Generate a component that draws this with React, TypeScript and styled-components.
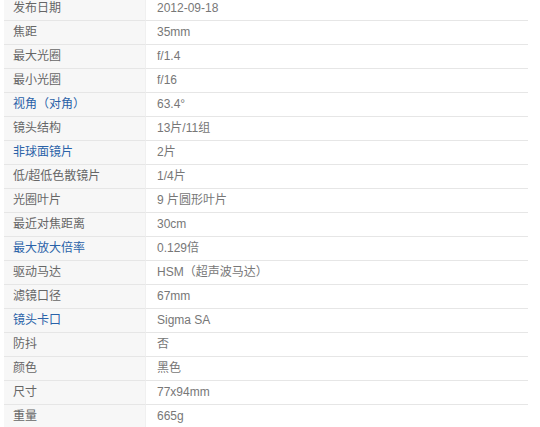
import styled, { createGlobalStyle } from 'styled-components'

type Spec = {
    label: string
    value: string
    link?: boolean
}

const specs: Spec[] = [
    { label: '发布日期', value: '2012-09-18' },
    { label: '焦距', value: '35mm' },
    { label: '最大光圈', value: 'f/1.4' },
    { label: '最小光圈', value: 'f/16' },
    { label: '视角（对角）', value: '63.4°', link: true },
    { label: '镜头结构', value: '13片/11组' },
    { label: '非球面镜片', value: '2片', link: true },
    { label: '低/超低色散镜片', value: '1/4片' },
    { label: '光圈叶片', value: '9 片圆形叶片' },
    { label: '最近对焦距离', value: '30cm' },
    { label: '最大放大倍率', value: '0.129倍', link: true },
    { label: '驱动马达', value: 'HSM（超声波马达）' },
    { label: '滤镜口径', value: '67mm' },
    { label: '镜头卡口', value: 'Sigma SA', link: true },
    { label: '防抖', value: '否' },
    { label: '颜色', value: '黑色' },
    { label: '尺寸', value: '77x94mm' },
    { label: '重量', value: '665g' },
]

const GlobalStyle = createGlobalStyle`
    html, body {
        margin: 0;
        padding: 0;
        background: #fff;
        overflow: hidden;
    }
    body {
        font-family: 'Liberation Sans', Arial, 'Noto Sans CJK SC', sans-serif;
        font-size: 12px;
    }
`

const Page = styled.div`
    width: 540px;
    height: 427px;
    overflow: hidden;
    padding: 0 12px 0 4px;
    box-sizing: border-box;
`

const Table = styled.div`
    display: grid;
    grid-template-columns: 141px 1fr;
    margin-top: -4px;
`

const Row = styled.div`
    display: contents;
`

const Label = styled.div<{ $link?: boolean }>`
    height: 23px;
    line-height: 23px;
    padding-left: 9px;
    background: #f7f7f7;
    border-top: 1px solid #e6e6e6;
    color: ${(p) => (p.$link ? '#2a62a8' : '#666')};
    white-space: nowrap;
`

const Value = styled.div`
    height: 23px;
    line-height: 23px;
    padding-left: 11px;
    background: #fff;
    border-top: 1px solid #e6e6e6;
    border-left: 1px solid #f0f0f0;
    color: #777;
    white-space: nowrap;
`

export default function App() {
    return (
        <Page>
            <GlobalStyle />
            <Table>
                {specs.map((s) => (
                    <Row key={s.label}>
                        <Label $link={s.link}>{s.label}</Label>
                        <Value>{s.value}</Value>
                    </Row>
                ))}
            </Table>
        </Page>
    )
}
